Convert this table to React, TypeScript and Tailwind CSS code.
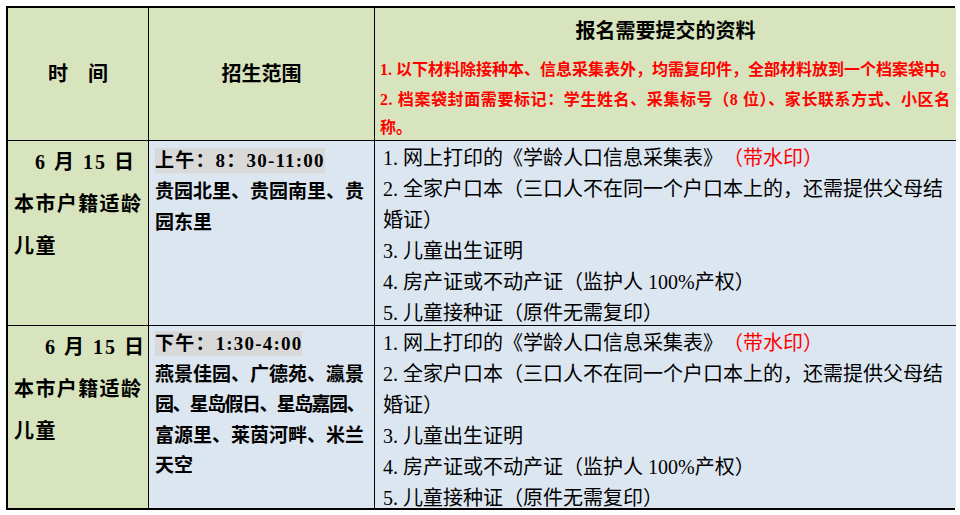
import React from "react";

const N = ({ n }: { n: string }) => <span className="mr-[5px]">{n}.</span>;

const Req = () => (
  <div className="pl-[8px] pt-[2px] text-[20px] leading-[31px] whitespace-nowrap font-normal">
    <div>
      <N n="1" />网上打印的《学龄人口信息采集表》<span className="ml-[10px] text-[#ff0000]">（带水印）</span>
    </div>
    <div>
      <N n="2" />全家户口本（三口人不在同一个户口本上的，还需提供父母结
    </div>
    <div>婚证）</div>
    <div>
      <N n="3" />儿童出生证明
    </div>
    <div>
      <N n="4" />房产证或不动产证（监护人 100%产权）
    </div>
    <div>
      <N n="5" />儿童接种证（原件无需复印）
    </div>
  </div>
);

const Time = ({ shift }: { shift: boolean }) => (
  <div className="text-[20px] leading-[42px] whitespace-nowrap font-semibold">
    <div className={shift ? "pl-[37px] tracking-[2px]" : "pl-[27px] tracking-[2px]"}>
      6 月 15 日
    </div>
    <div className="pl-[6px] tracking-[1.4px]">本市户籍适龄</div>
    <div className="pl-[6px] tracking-[1.4px]">儿童</div>
  </div>
);

export default function App() {
  return (
    <div className="w-[960px] h-[515px] bg-white pt-[6px] pl-[6px] font-['Liberation_Serif','Noto_Sans_CJK_SC',serif] text-black">
      <div className="w-[949px] border-2 border-black grid grid-cols-[141px_226px_1fr] grid-rows-[133px_185px_182px]">
        {/* header */}
        <div className="bg-[#d7e4bd] border-r border-b border-black flex items-center justify-center text-[20px] font-bold">
          时　间
        </div>
        <div className="bg-[#d7e4bd] border-r border-b border-black flex items-center justify-center text-[20px] font-bold">
          招生范围
        </div>
        <div className="bg-[#d7e4bd] border-b border-black whitespace-nowrap font-bold">
          <div className="text-center text-[20px] leading-[40px] pt-[3px]">报名需要提交的资料</div>
          <div className="pl-[5px] text-[16px] leading-[30px] text-[#ff0000] mt-[4px]">
            <div>1. 以下材料除接种本、信息采集表外，均需复印件，全部材料放到一个档案袋中。</div>
            <div className="tracking-[0.6px]">2. 档案袋封面需要标记：学生姓名、采集标号（8 位）、家长联系方式、小区名</div>
            <div className="leading-[26px]">称。</div>
          </div>
        </div>

        {/* row 1 */}
        <div className="bg-[#d7e4bd] border-r border-b border-black">
          <Time shift={false} />
        </div>
        <div className="bg-[#dce6f1] border-r border-b border-black pl-[6px] pt-[4px] text-[19px] leading-[31px] whitespace-nowrap font-semibold">
          <div>
            <span className="bg-[#d9d9d9] py-[2px] tracking-[1.2px]">上午：8：30-11:00</span>
          </div>
          <div>贵园北里、贵园南里、贵</div>
          <div>园东里</div>
        </div>
        <div className="bg-[#dce6f1] border-b border-black">
          <Req />
        </div>

        {/* row 2 */}
        <div className="bg-[#d7e4bd] border-r border-black">
          <Time shift={true} />
        </div>
        <div className="bg-[#dce6f1] border-r border-black pl-[6px] pt-[3px] text-[19px] leading-[30.5px] whitespace-nowrap font-semibold">
          <div>
            <span className="bg-[#d9d9d9] py-[2px] tracking-[1.2px]">下午：1:30-4:00</span>
          </div>
          <div>燕景佳园、广德苑、瀛景</div>
          <div className="tracking-[-1.6px]">园、星岛假日、星岛嘉园、</div>
          <div>富源里、莱茵河畔、米兰</div>
          <div>天空</div>
        </div>
        <div className="bg-[#dce6f1]">
          <Req />
        </div>
      </div>
    </div>
  );
}
